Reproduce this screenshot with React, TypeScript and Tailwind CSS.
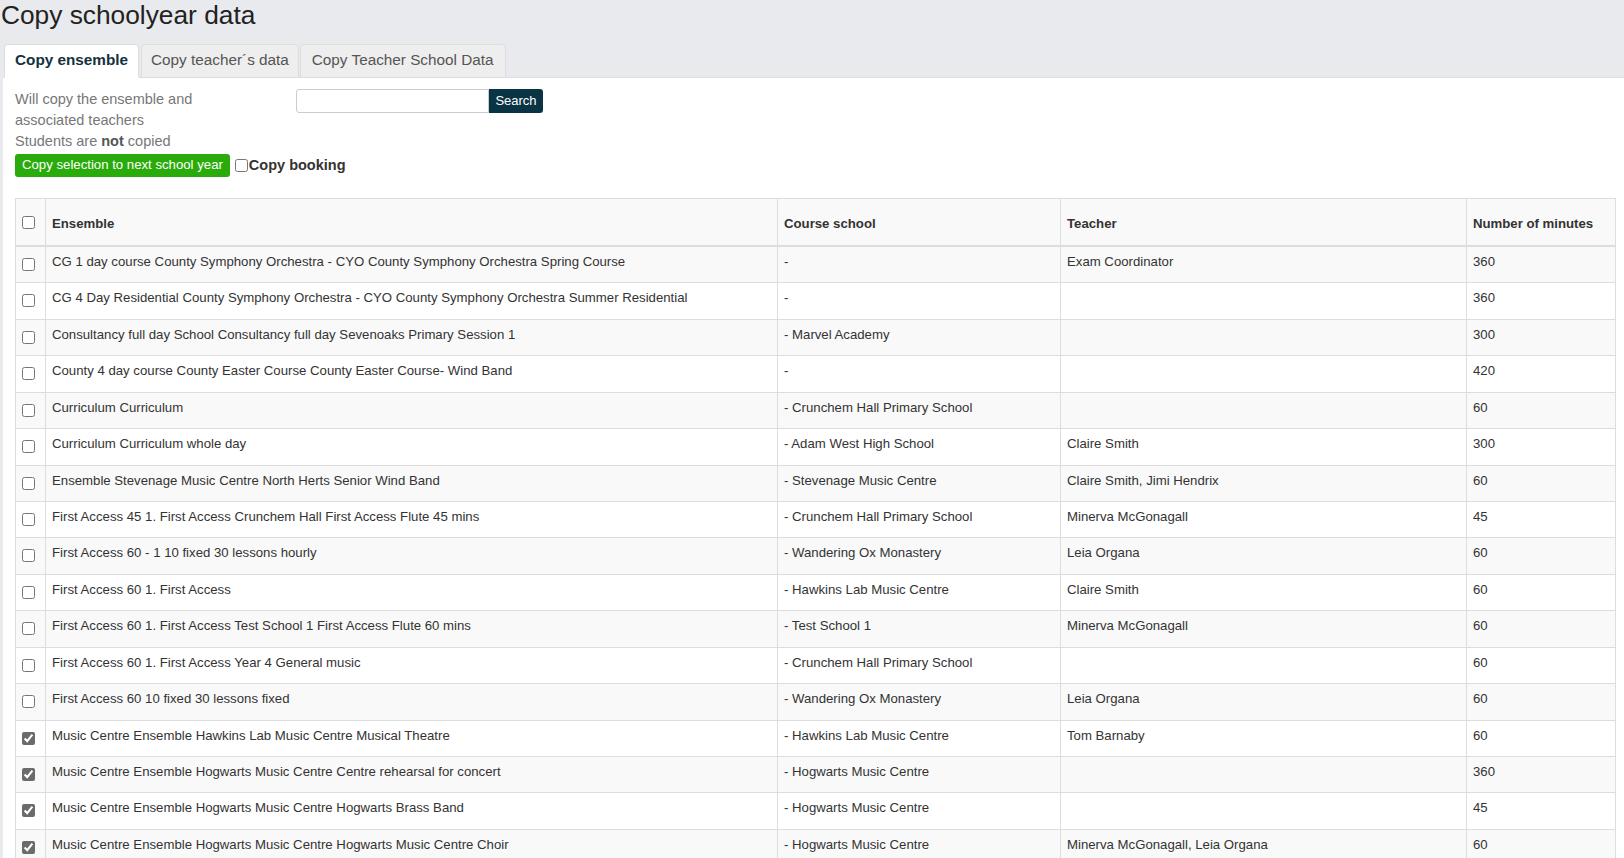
import React from "react";

interface Row {
  ensemble: string;
  school: string;
  teacher: string;
  minutes: number;
  checked?: boolean;
}

const rows: Row[] = [
  { ensemble: "CG 1 day course County Symphony Orchestra - CYO County Symphony Orchestra Spring Course", school: "-", teacher: "Exam Coordinator", minutes: 360 },
  { ensemble: "CG 4 Day Residential County Symphony Orchestra - CYO County Symphony Orchestra Summer Residential", school: "-", teacher: "", minutes: 360 },
  { ensemble: "Consultancy full day School Consultancy full day Sevenoaks Primary Session 1", school: "- Marvel Academy", teacher: "", minutes: 300 },
  { ensemble: "County 4 day course County Easter Course County Easter Course- Wind Band", school: "-", teacher: "", minutes: 420 },
  { ensemble: "Curriculum Curriculum", school: "- Crunchem Hall Primary School", teacher: "", minutes: 60 },
  { ensemble: "Curriculum Curriculum whole day", school: "- Adam West High School", teacher: "Claire Smith", minutes: 300 },
  { ensemble: "Ensemble Stevenage Music Centre North Herts Senior Wind Band", school: "- Stevenage Music Centre", teacher: "Claire Smith, Jimi Hendrix", minutes: 60 },
  { ensemble: "First Access 45 1. First Access Crunchem Hall First Access Flute 45 mins", school: "- Crunchem Hall Primary School", teacher: "Minerva McGonagall", minutes: 45 },
  { ensemble: "First Access 60 - 1 10 fixed 30 lessons hourly", school: "- Wandering Ox Monastery", teacher: "Leia Organa", minutes: 60 },
  { ensemble: "First Access 60 1. First Access", school: "- Hawkins Lab Music Centre", teacher: "Claire Smith", minutes: 60 },
  { ensemble: "First Access 60 1. First Access Test School 1 First Access Flute 60 mins", school: "- Test School 1", teacher: "Minerva McGonagall", minutes: 60 },
  { ensemble: "First Access 60 1. First Access Year 4 General music", school: "- Crunchem Hall Primary School", teacher: "", minutes: 60 },
  { ensemble: "First Access 60 10 fixed 30 lessons fixed", school: "- Wandering Ox Monastery", teacher: "Leia Organa", minutes: 60 },
  { ensemble: "Music Centre Ensemble Hawkins Lab Music Centre Musical Theatre", school: "- Hawkins Lab Music Centre", teacher: "Tom Barnaby", minutes: 60, checked: true },
  { ensemble: "Music Centre Ensemble Hogwarts Music Centre Centre rehearsal for concert", school: "- Hogwarts Music Centre", teacher: "", minutes: 360, checked: true },
  { ensemble: "Music Centre Ensemble Hogwarts Music Centre Hogwarts Brass Band", school: "- Hogwarts Music Centre", teacher: "", minutes: 45, checked: true },
  { ensemble: "Music Centre Ensemble Hogwarts Music Centre Hogwarts Music Centre Choir", school: "- Hogwarts Music Centre", teacher: "Minerva McGonagall, Leia Organa", minutes: 60, checked: true },
];

const tabs = [
  { label: "Copy ensemble", cls: "mr-[2px] border-b-white bg-white px-[10px] font-bold text-[#14313d]" },
  { label: "Copy teacher´s data", cls: "mr-px bg-[#eeeeee] px-[9px] text-[#555]" },
  { label: "Copy Teacher School Data", cls: "bg-[#eeeeee] px-[11px] text-[#555]" },
];

function Check({ checked }: { checked?: boolean }) {
  return (
    <input
      type="checkbox"
      defaultChecked={checked}
      className="m-0 block h-[13px] w-[13px] accent-[#6b6b6b]"
    />
  );
}

export default function App() {
  return (
    <div className="h-[858px] overflow-hidden bg-[#e9eaed] font-['Liberation_Sans',Arial,sans-serif] text-[#333]">
      <h1 className="pl-px text-[26.3px] leading-[30px] font-normal text-[#222]">Copy schoolyear data</h1>

      <div className="mt-[13.5px] pl-[3px]">
        <ul className="flex border-b border-[#ddd] pl-px">
          {tabs.map((t) => (
            <li
              key={t.label}
              className={`-mb-px flex h-[34px] items-center rounded-t-[4px] border border-[#ddd] text-[15.3px] ${t.cls}`}
            >
              {t.label}
            </li>
          ))}
        </ul>

        <div className="bg-white px-[12px] pt-[11px]">
          <div className="flex">
            <p className="w-[281px] text-[14.5px] leading-[21.3px] text-[#777]">
              Will copy the ensemble and
              <br />
              associated teachers
              <br />
              Students are <b className="text-[#555]">not</b> copied
            </p>
            <div className="mt-[0.5px] flex h-[24px]">
              <input className="h-[24px] w-[193px] rounded-l-[3px] border border-[#ccc] bg-white px-2 text-[13px] outline-none" />
              <button className="h-[24px] w-[54px] rounded-r-[3px] bg-[#0a3343] text-[13px] text-white">Search</button>
            </div>
          </div>

          <div className="mt-[1.5px] flex items-center">
            <button className="h-[23px] rounded-[3px] bg-[#2aab0c] px-[7px] text-[13.2px] text-white">
              Copy selection to next school year
            </button>
            <input type="checkbox" className="m-0 ml-[5px] h-[13px] w-[13px]" />
            <span className="ml-px text-[14.5px] font-bold text-[#333]">Copy booking</span>
          </div>

          <table className="mt-[21px] w-[1601px] table-fixed border-collapse border border-[#ddd] text-[13.2px]">
            <colgroup>
              <col className="w-[30px]" />
              <col className="w-[732px]" />
              <col className="w-[283px]" />
              <col className="w-[406px]" />
              <col />
            </colgroup>
            <thead>
              <tr className="h-[48px] bg-[#f9f9f9]">
                <th className="border border-b-2 border-[#ddd] pl-[6px] align-middle">
                  <Check />
                </th>
                <th className="border border-b-2 border-[#ddd] pl-[6px] pt-[3px] text-left align-middle font-bold">Ensemble</th>
                <th className="border border-b-2 border-[#ddd] pl-[6px] pt-[3px] text-left align-middle font-bold">Course school</th>
                <th className="border border-b-2 border-[#ddd] pl-[6px] pt-[3px] text-left align-middle font-bold">Teacher</th>
                <th className="border border-b-2 border-[#ddd] pl-[6px] pt-[3px] text-left align-middle font-bold">Number of minutes</th>
              </tr>
            </thead>
            <tbody>
              {rows.map((r, i) => (
                <tr key={i} className={i % 2 === 0 ? "h-[36.45px] bg-[#f9f9f9]" : "h-[36.45px] bg-white"}>
                  <td className="border border-[#ddd] pl-[6px] pt-[11px] align-top">
                    <Check checked={r.checked} />
                  </td>
                  <td className="border border-[#ddd] pl-[6px] pt-[6px] align-top leading-[18px]">{r.ensemble}</td>
                  <td className="border border-[#ddd] pl-[6px] pt-[6px] align-top leading-[18px]">{r.school}</td>
                  <td className="border border-[#ddd] pl-[6px] pt-[6px] align-top leading-[18px]">{r.teacher}</td>
                  <td className="border border-[#ddd] pl-[6px] pt-[6px] align-top leading-[18px]">{r.minutes}</td>
                </tr>
              ))}
            </tbody>
          </table>
        </div>
      </div>
    </div>
  );
}
